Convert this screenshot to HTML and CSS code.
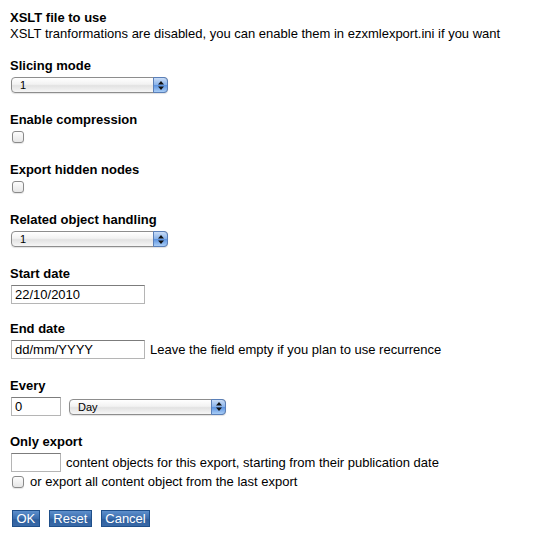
FILE: index.html
```html
<!DOCTYPE html>
<html>
<head>
<meta charset="utf-8">
<link rel="stylesheet" href="styles.css">
</head>
<body>
<form class="form">
  <div class="block">
    <label class="label">XSLT file to use</label>
    <p class="text">XSLT tranformations are disabled, you can enable them in ezxmlexport.ini if you want</p>
  </div>

  <div class="block m19">
    <label class="label">Slicing mode</label>
    <span class="select wide"><select><option>1</option></select><span class="select-btn"><svg width="6" height="9" viewBox="0 0 6 9"><path d="M3 0L6 3.5H0Z M0 5.5H6L3 9Z" fill="#111"/></svg></span></span>
  </div>

  <div class="block m19">
    <label class="label">Enable compression</label>
    <span class="check"></span>
  </div>

  <div class="block m19">
    <label class="label">Export hidden nodes</label>
    <span class="check"></span>
  </div>

  <div class="block m19">
    <label class="label">Related object handling</label>
    <span class="select wide"><select><option>1</option></select><span class="select-btn"><svg width="6" height="9" viewBox="0 0 6 9"><path d="M3 0L6 3.5H0Z M0 5.5H6L3 9Z" fill="#111"/></svg></span></span>
  </div>

  <div class="block m17">
    <label class="label">Start date</label>
    <input class="input date" type="text" value="22/10/2010">
  </div>

  <div class="block m19">
    <label class="label">End date</label>
    <div class="row">
      <input class="input date" type="text" value="dd/mm/YYYY">
      <span class="hint">Leave the field empty if you plan to use recurrence</span>
    </div>
  </div>

  <div class="block m18">
    <label class="label">Every</label>
    <div class="row gap7">
      <input class="input small" type="text" value="0">
      <span class="select wide"><select><option>Day</option></select><span class="select-btn"><svg width="6" height="9" viewBox="0 0 6 9"><path d="M3 0L6 3.5H0Z M0 5.5H6L3 9Z" fill="#111"/></svg></span></span>
    </div>
  </div>

  <div class="block last">
    <label class="label">Only export</label>
    <div class="row">
      <input class="input small" type="text" value="">
      <span class="hint">content objects for this export, starting from their publication date</span>
    </div>
    <div class="row checkrow">
      <span class="check"></span>
      <span class="hint">or export all content object from the last export</span>
    </div>
  </div>

  <div class="buttons">
    <button type="button" class="btn">OK</button>
    <button type="button" class="btn">Reset</button>
    <button type="button" class="btn">Cancel</button>
  </div>
</form>
</body>
</html>
```

FILE: styles.css
```css
html, body {
  margin: 0;
  padding: 0;
  background: #fff;
}
body {
  font-family: "Liberation Sans", Arial, Helvetica, sans-serif;
  font-size: 13px;
  line-height: 16px;
  color: #000;
}
.form {
  padding: 10px 10px 0 10px;
}
.block {
  margin-bottom: 16px;
}
.m17 { margin-bottom: 17px; }
.m18 { margin-bottom: 18px; }
.m19 { margin-bottom: 19px; }
.label {
  display: block;
  font-weight: bold;
  line-height: 16px;
  margin-bottom: 3px;
}
.block:first-child .label {
  margin-bottom: 0;
}
.text {
  margin: 0;
}
.select {
  position: relative;
  display: inline-block;
  width: 157px;
  height: 16px;
  margin-left: 1px;
  vertical-align: top;
}
.select select {
  -webkit-appearance: none;
  appearance: none;
  box-sizing: border-box;
  width: 100%;
  height: 16px;
  margin: 0;
  padding: 0 0 0 8px;
  border: 1px solid #8d8d8d;
  border-radius: 4px;
  background: linear-gradient(#ffffff, #f2f2f2 45%, #e2e2e2 55%, #f6f6f6);
  font-family: "Liberation Sans", Arial, sans-serif;
  font-size: 11px;
  line-height: 14px;
  color: #000;
  box-shadow: 0 1px 1px rgba(0,0,0,0.12);
}
.select-btn {
  position: absolute;
  top: 0;
  right: 0;
  width: 15px;
  height: 16px;
  box-sizing: border-box;
  border: 1px solid #5a7fb8;
  border-radius: 0 4px 4px 0;
  background: linear-gradient(#c9dcf6, #8ab3ea 48%, #5c93e0 52%, #a9cdf6);
  display: flex;
  align-items: center;
  justify-content: center;
}
.check {
  display: block;
  width: 10px;
  height: 10px;
  margin: 3px 0 0 2px;
  border: 1px solid #8a8a8a;
  border-radius: 3px;
  background: linear-gradient(#fdfdfd, #e6e6e6);
  box-shadow: 0 1px 1px rgba(0,0,0,0.1);
}
.input {
  box-sizing: border-box;
  height: 19px;
  margin: 0 0 0 1px;
  padding: 0 3px;
  border: 1px solid #b5b5b5;
  border-top-color: #7c7c7c;
  background: #fff;
  font-family: "Liberation Sans", Arial, sans-serif;
  font-size: 13px;
  color: #000;
  outline: none;
}
.date {
  width: 134px;
}
.small {
  width: 50px;
}
.row {
  display: flex;
  align-items: center;
}
.hint {
  margin-left: 5px;
}
.gap7 {
  gap: 7px;
}
.checkrow {
  margin-top: 2px;
}
.checkrow .check {
  margin: 0 0 0 2px;
}
.checkrow .hint {
  margin-left: 6px;
}
.last {
  margin-bottom: 0;
}
.buttons {
  display: flex;
  gap: 9px;
  margin-top: 20px;
  padding-left: 2px;
}
.btn {
  height: 17px;
  margin: 0;
  padding: 0 3.5px;
  border: 1px solid #1f4f8a;
  background: linear-gradient(#5d8fcc, #3a6cac 50%, #2f5f9d 51%, #3a6aa8);
  color: #fff;
  font-family: "Liberation Sans", Arial, sans-serif;
  font-size: 13px;
  line-height: 15px;
}
```
